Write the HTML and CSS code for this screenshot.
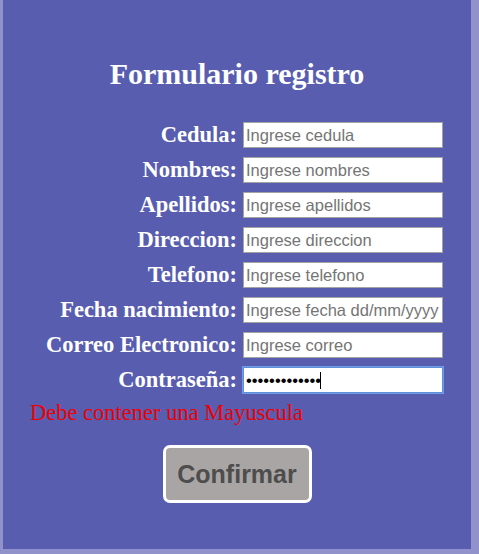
FILE: index.html
```html
<!DOCTYPE html>
<html lang="es">
<head>
<meta charset="utf-8">
<title>Formulario registro</title>
<link rel="stylesheet" href="styles.css">
</head>
<body>
<div class="page">
  <h1 class="title">Formulario registro</h1>
  <form class="form">
    <label class="label" for="cedula">Cedula:</label>
    <input class="field" id="cedula" type="text" placeholder="Ingrese cedula">
    <label class="label" for="nombres">Nombres:</label>
    <input class="field" id="nombres" type="text" placeholder="Ingrese nombres">
    <label class="label" for="apellidos">Apellidos:</label>
    <input class="field" id="apellidos" type="text" placeholder="Ingrese apellidos">
    <label class="label" for="direccion">Direccion:</label>
    <input class="field" id="direccion" type="text" placeholder="Ingrese direccion">
    <label class="label" for="telefono">Telefono:</label>
    <input class="field" id="telefono" type="text" placeholder="Ingrese telefono">
    <label class="label" for="fecha">Fecha nacimiento:</label>
    <input class="field" id="fecha" type="text" placeholder="Ingrese fecha dd/mm/yyyy">
    <label class="label" for="correo">Correo Electronico:</label>
    <input class="field" id="correo" type="text" placeholder="Ingrese correo">
    <label class="label" for="clave">Contraseña:</label>
    <div class="field-wrap">
      <input class="field field-focus" id="clave" type="password" value="Abcdefghijklm">
      <span class="caret"></span>
    </div>
  </form>
  <p class="error">Debe contener una Mayuscula</p>
  <div class="actions">
    <button class="btn" type="button">Confirmar</button>
  </div>
</div>
</body>
</html>
```
FILE: styles.css
```css
html, body {
  margin: 0;
  padding: 0;
}
body {
  background: #9192cc;
  height: 554px;
  overflow: hidden;
}
.page {
  margin: 0 8px 0 3px;
  height: 549px;
  box-sizing: border-box;
  padding-top: 57px;
  background: #585db0;
  font-family: "Liberation Serif", "Times New Roman", serif;
  color: #ffffff;
}
.title {
  margin: 0;
  font-size: 30px;
  line-height: 34px;
  font-weight: bold;
  text-align: center;
}
.form {
  margin: 31px 0 0 0;
  display: grid;
  grid-template-columns: 234px 200px;
  column-gap: 6px;
  row-gap: 9px;
  align-items: center;
}
.label {
  text-align: right;
  font-size: 22.5px;
  line-height: 26px;
  font-weight: bold;
  white-space: nowrap;
}
.field-wrap {
  position: relative;
  height: 26px;
}
.field {
  display: block;
  width: 200px;
  height: 26px;
  box-sizing: border-box;
  margin: 0;
  padding: 0 2px 0 2px;
  border: 1px solid #a3a3a3;
  background: #ffffff;
  font-family: "Liberation Sans", Arial, sans-serif;
  font-size: 16.5px;
  color: #000000;
  outline: none;
}
.field::placeholder {
  color: #757575;
}
.field-focus {
  border-color: #5f8fdc;
  box-shadow: 0 0 0 1px #6f9de4;
}
.caret {
  position: absolute;
  left: 77px;
  top: 5px;
  width: 1px;
  height: 17px;
  background: #000000;
}
.error {
  margin: 7px 0 0 0;
  padding-left: 27px;
  font-size: 22.5px;
  line-height: 26px;
  color: #f00000;
}
.actions {
  margin-top: 19px;
  display: flex;
  justify-content: center;
}
.btn {
  width: 149px;
  height: 58px;
  box-sizing: border-box;
  border: 3px solid #ffffff;
  border-radius: 7px;
  background: #a9a5a5;
  color: #4d4d4d;
  font-family: "Liberation Sans", Arial, sans-serif;
  font-size: 25px;
  font-weight: bold;
  padding: 0;
}
```
